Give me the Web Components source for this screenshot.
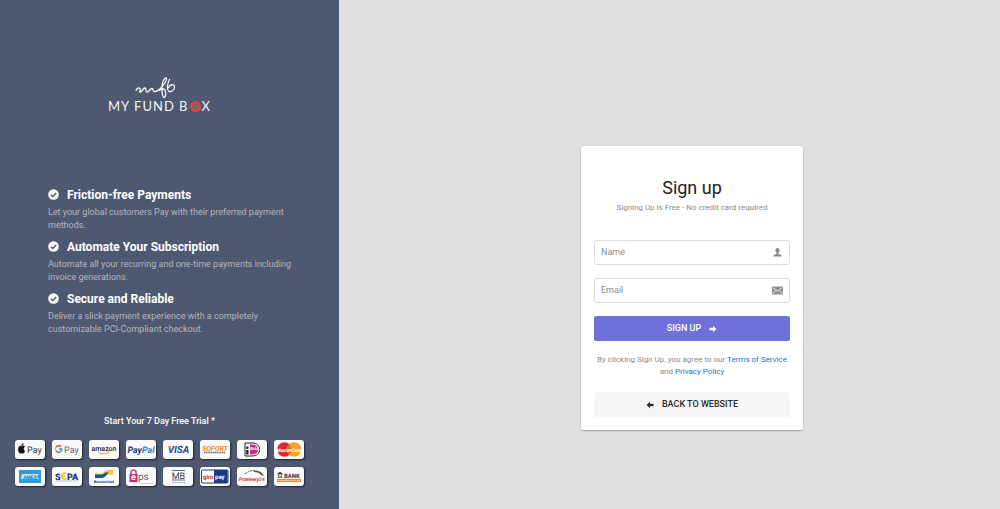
<!DOCTYPE html>
<html lang="en">
<head>
<meta charset="utf-8">
<meta name="viewport" content="width=device-width, initial-scale=1">
<title>MyFundBox - Sign up</title>
<style>
    body {
        margin: 0;
        font-family: Roboto, "Liberation Sans", sans-serif;
        font-size: 9px;
        line-height: 13px;
        color: #8c8c8c;
        background: #e0e0e0;
    }
</style>
</head>
<body>
<signup-page>
    <promo-panel slot="promo">
        <brand-logo slot="logo"></brand-logo>
        <feature-item title="Friction-free Payments">Let your global customers Pay with their preferred payment methods.</feature-item>
        <feature-item title="Automate Your Subscription">Automate all your recurring and one-time payments including invoice generations.</feature-item>
        <feature-item title="Secure and Reliable">Deliver a slick payment experience with a completely customizable PCI-Compliant checkout.</feature-item>
        <payment-methods slot="payments">Start Your 7 Day Free Trial *</payment-methods>
    </promo-panel>
    <signup-card>
        <text-field label="Name" type="text" icon="user"></text-field>
        <text-field label="Email" type="email" icon="mail"></text-field>
    </signup-card>
</signup-page>

<script>
class SignupPage extends HTMLElement {
    constructor() {
        super();
        this.attachShadow({ mode: "open" }).innerHTML = `
            <style>
                :host {
                    display: grid;
                    grid-template-columns: 33.9% 1fr;
                    min-height: 100vh;
                }
                main {
                    display: flex;
                    align-items: center;
                    justify-content: center;
                    padding: 67px 0 0 45px;
                }
            </style>
            <slot name="promo"></slot>
            <main><slot></slot></main>
        `;
    }
}

class PromoPanel extends HTMLElement {
    constructor() {
        super();
        this.attachShadow({ mode: "open" }).innerHTML = `
            <style>
                :host {
                    display: flex;
                    flex-direction: column;
                    justify-content: space-between;
                    box-sizing: border-box;
                    padding: 77px 20px 23px 0;
                    background: #4e5871;
                }
                .features {
                    display: flex;
                    flex-direction: column;
                    gap: 5px;
                    padding: 0 24px 8px 48px;
                }
            </style>
            <slot name="logo"></slot>
            <div class="features"><slot></slot></div>
            <slot name="payments"></slot>
        `;
    }
}

class BrandLogo extends HTMLElement {
    constructor() {
        super();
        this.attachShadow({ mode: "open" }).innerHTML = `
            <style>
                :host {
                    display: flex;
                    flex-direction: column;
                    align-items: center;
                    color: #f4f5f8;
                }
                .script {
                    display: block;
                    width: 42px;
                    height: 22px;
                    margin-right: 8px;
                }
                .word {
                    display: flex;
                    align-items: center;
                    gap: 1px;
                    font: 13px/14px Lato, sans-serif;
                    letter-spacing: 1px;
                }
            </style>
            <svg class="script" viewBox="0 0 42 22" fill="none" stroke="currentColor" stroke-width="1.3" stroke-linecap="round" stroke-linejoin="round" aria-hidden="true">
                <path d="M1 13.5C2 11 4 10.500 5 11.500C6 13 4 15 5 15C7 15 8 11 10 11C12 11 10 15 12 15C14 15 15 11.500 17 11.500C19 11.500 17 15 20 14.500C25 14 32 4 31.500 1.500C31 0 28.500 2 27.500 6C26.500 10 27 20 29 20.500C31 21 31 15 30 13C29 11 25 12.500 24.500 13.500M34.500 2.500C32.500 6 31.500 12 33.500 14C35.500 16 40 13 39.500 9.500C39 6.500 35 7.500 33.500 10.500"/>
            </svg>
            <div class="word">
                <span>MY FUND B</span>
                <svg width="11" height="11" viewBox="0 0 11 11" aria-hidden="true">
                    <circle cx="5.500" cy="5.500" r="3.700" fill="none" stroke="#d8433b" stroke-width="3"/>
                    <circle cx="5.500" cy="5.500" r="4.900" fill="none" stroke="#ef6a4d" stroke-width=".8" stroke-dasharray="1 1"/>
                    <circle cx="5.500" cy="5.500" r="2" fill="#3f7468"/>
                    <path d="M5.500 3.500v4M3.500 5.500h4" stroke="#b8604f" stroke-width=".8"/>
                </svg>
                <span>X</span>
            </div>
        `;
    }
}

class FeatureItem extends HTMLElement {
    constructor() {
        super();
        this.attachShadow({ mode: "open" });
    }

    connectedCallback() {
        this.shadowRoot.innerHTML = `
            <style>
                :host {
                    display: block;
                    color: #b4b6bd;
                }
                h2 {
                    display: flex;
                    align-items: center;
                    gap: 8px;
                    margin: 0 0 1px;
                    font-size: 12px;
                    font-weight: 700;
                    line-height: 20px;
                    color: #fff;
                    white-space: nowrap;
                }
                p {
                    margin: 0;
                }
            </style>
            <h2>
                <svg width="11" height="11" viewBox="0 0 11 11" aria-hidden="true">
                    <circle cx="5.500" cy="5.500" r="5.300" fill="#fff"/>
                    <path d="M2.900 5.700l1.800 1.800 3.500-3.600" fill="none" stroke="#4e5871" stroke-width="1.500"/>
                </svg>
                ${this.getAttribute("title")}
            </h2>
            <p><slot></slot></p>
        `;
    }
}

// Artwork for each payment badge, drawn on a 30x19 board
const BADGES = [
    ["Apple Pay", `
        <path d="M6.800 5.500c0-1 .6-1.700 1.500-2 .1 1-.6 1.900-1.500 2zM9.700 11.200c-.5 1.300-1.200 2.100-1.900 2.100-.5 0-.7-.3-1.300-.3s-.8.3-1.300.3C4 13.300 3.300 10.700 3.300 9.200c0-2 1.100-3.300 2.300-3.300.6 0 .9.300 1.300.3.400 0 .8-.4 1.500-.4.500 0 1.100.3 1.400.8-1.700 1-1.400 3.600-.1 4.600z" fill="#111" stroke="#111" stroke-width=".5"/>
        <text x="12" y="12.500" font-size="9" fill="#333">Pay</text>`],
    ["Google Pay", `
        <g fill="none" stroke-width="1.500">
            <path d="M9 6.700A3.200 3.200 0 0 0 4 7.200" stroke="#ea4335"/>
            <path d="M4 7.200a3.200 3.200 0 0 0 0 3.600" stroke="#fbbc05"/>
            <path d="M4 10.800a3.200 3.200 0 0 0 4.600.7" stroke="#34a853"/>
            <path d="M8.600 11.500c.8-.7 1.100-1.400 1.100-2.500H6.700" stroke="#4285f4"/>
        </g>
        <text x="12" y="12.500" font-size="9" fill="#5f6368">Pay</text>`],
    ["amazon", `
        <text x="15" y="11" font-size="7" font-weight="500" text-anchor="middle" fill="#222">amazon</text>
        <path d="M9 12c3 2.300 8 2.300 10.500.3" fill="none" stroke="#f7981d"/>
        <path d="M18 11.800l2.300-.2-.6 2" fill="none" stroke="#f7981d" stroke-width=".7"/>`],
    ["PayPal", `
        <text x="15" y="12.500" font-size="9" font-weight="700" font-style="italic" text-anchor="middle" fill="#173a72">Pay<tspan fill="#248ac5">Pal</tspan></text>`],
    ["Visa", `
        <text x="15.500" y="13" font-size="10" font-weight="700" font-style="italic" text-anchor="middle" fill="#174ea0">VISA</text>
        <path d="M4.500 6h3l1.200 3.500z" fill="#f2a71b"/>`],
    ["Sofort", `
        <text x="15" y="10.500" font-size="7" font-weight="700" font-style="italic" text-anchor="middle" fill="#ef8b22">SOFORT</text>
        <path d="M4 12.500h21" stroke="#666" stroke-width="1.400" stroke-dasharray="1.300 .5"/>`],
    ["iDEAL", `
        <path d="M8 3h7c5 0 7.500 2.500 7.500 6.500S20 16 15 16H8z" fill="#fff" stroke="#222"/>
        <path d="M13 4.500h2c4 0 6 2 6 5s-2 5-6 5h-2z" fill="#d12a85"/>
        <circle cx="10.300" cy="7.800" r="1.300" fill="#222"/>
        <path d="M9.200 10h2.300v4.500H9.200z" fill="#222"/>
        <text x="12.500" y="9.500" font-size="4" font-weight="700" fill="#fff">DEAL</text>`],
    ["MasterCard", `
        <circle cx="10.500" cy="9.500" r="7.300" fill="#dc2b27"/>
        <circle cx="20" cy="9.500" r="7.300" fill="#f5a623"/>
        <path d="M15.250 4a7.300 7.300 0 0 1 0 11 7.300 7.300 0 0 1 0-11z" fill="#e66b25"/>
        <text x="15" y="11.500" font-size="5" font-weight="700" font-style="italic" text-anchor="middle" fill="#fff">MasterCard</text>`],
    ["American Express", `
        <path d="M4 3h22v13H4z" fill="#2f9bd8"/>
        <path d="M7 7h17l-2 2.500 2 2.500H6z" fill="#c9e7f7"/>
        <text x="15" y="11.500" font-size="5" font-weight="700" text-anchor="middle" fill="#1676b4">AMEX</text>`],
    ["SEPA", `
        <text x="3" y="12.500" font-size="9" font-weight="900" fill="#173b88">S</text>
        <path d="M14.500 6.700a3 3 0 1 0 0 4.900M9 9.200h4.500" fill="none" stroke="#f5c51b" stroke-width="1.600"/>
        <text x="15" y="12.500" font-size="9" font-weight="900" fill="#173b88">PA</text>
        <path d="M4 14h22" stroke="#7184b0" stroke-width=".7" stroke-dasharray="1 .5"/>`],
    ["Bancontact", `
        <path d="M6 6.500h5.500c3 0 4-3.500 7.500-3.500h5v4.500h-4.500c-3 0-4 3.500-7.500 3.500H6z" fill="#f7ca25"/>
        <path d="M6 7.500h6.500c1.500 0 2.500-1 3.500-2h3.500c-2 3-4 5.500-7.500 5.500H6z" fill="#18539b"/>
        <text x="15" y="16" font-size="4" font-weight="700" text-anchor="middle" fill="#18539b">Bancontact</text>`],
    ["eps", `
        <path d="M3.500 7h8v8h-8z" fill="#c52a78"/>
        <path d="M5 7V4.500Q7.500 1.500 10 4.500V7" fill="none" stroke="#c52a78" stroke-width="1.400"/>
        <text x="5" y="13" font-size="9" font-weight="700" fill="#fff">e</text>
        <text x="12" y="13" font-size="10" fill="#666">ps</text>
        <path d="M15 16.500h12" stroke="#999" stroke-width=".7" stroke-dasharray="1 .5"/>`],
    ["Multibanco", `
        <path d="M9 3.500h13M9 13h13" stroke="#4776a0"/>
        <text x="15.500" y="12" font-size="9" text-anchor="middle" fill="#35434f">MB</text>
        <path d="M9 15.500h13" stroke="#888" stroke-width=".8" stroke-dasharray="1 .5"/>`],
    ["giropay", `
        <rect x="1.500" y="3" width="26.500" height="13" rx="1" fill="#fff" stroke="#173a86"/>
        <path d="M14 3h13.500v13H14z" fill="#173a86"/>
        <text x="3" y="11.500" font-size="6" font-weight="700" fill="#d92332">giro</text>
        <text x="15" y="11.500" font-size="6" font-weight="700" fill="#fff">pay</text>`],
    ["Przelewy24", `
        <path d="M8 7Q14 2 20 4" fill="none" stroke="#555" stroke-dasharray="2 1"/>
        <path d="M17 4q7-1 10 5l-3-1q-2-3-7-3z" fill="#555"/>
        <text x="2" y="13.500" font-size="5" font-style="italic" font-weight="700" fill="#d6253b">Przelewy<tspan fill="#777">24</tspan></text>`],
    ["Bank transfer", `
        <path d="M3.500 7L6 5l2.500 2zM3.500 10.500h5M4.500 7.500v3M6 7.500v3M7.500 7.500v3" fill="#333" stroke="#333" stroke-width=".6"/>
        <text x="10" y="10.500" font-size="6" font-weight="700" fill="#333">BANK</text>
        <path d="M3 12h24v3H3z" fill="#ec853a"/>
        <path d="M4 13.500h22" stroke="#f9d5b6" stroke-width="1.200" stroke-dasharray="1.300 .6"/>`]
];

class PaymentMethods extends HTMLElement {
    constructor() {
        super();
        this.attachShadow({ mode: "open" }).innerHTML = `
            <style>
                :host {
                    display: block;
                }
                h3 {
                    margin: 0 0 12px;
                    font-size: 9px;
                    font-weight: 500;
                    line-height: 13px;
                    text-align: center;
                    color: #fff;
                }
                ul {
                    display: grid;
                    grid-template-columns: repeat(8, 30px);
                    justify-content: center;
                    gap: 8px 7px;
                    margin: 0;
                    padding: 0;
                    list-style: none;
                }
                li {
                    height: 19px;
                    border-radius: 3px;
                    background: #fafafa;
                    box-shadow: 1px 1px 2px rgba(0, 0, 0, 0.6);
                }
                svg {
                    display: block;
                    width: 30px;
                    height: 19px;
                    text-rendering: geometricPrecision;
                }
            </style>
            <h3><slot></slot></h3>
            <ul>
                ${BADGES.map(([name, art]) => `
                    <li><svg viewBox="0 0 30 19" role="img" aria-label="${name}">${art}</svg></li>
                `).join("")}
            </ul>
        `;
    }
}

const FIELD_ICONS = {
    user: `<path d="M5.500 1C3.800 1 3.300 2.200 3.500 3.700c.1 1 .5 1.700 1 2.100v.9C4 7.500 1 7.400 1 9.500h9c0-2.100-3-2-3.500-2.800v-.9c.5-.4.900-1.100 1-2.100C7.700 2.200 7.200 1 5.500 1z" fill="#8e8e8e"/>`,
    mail: `<path d="M0 1.500h11v8H0z" fill="#8e8e8e"/><path d="M1 2.700l4.500 3.500L10 2.700M1 8.500l3-3M10 8.500l-3-3" fill="none" stroke="#fff" stroke-width=".8"/>`
};

class TextField extends HTMLElement {
    constructor() {
        super();
        this.attachShadow({ mode: "open" });
    }

    connectedCallback() {
        const label = this.getAttribute("label");
        this.shadowRoot.innerHTML = `
            <style>
                :host {
                    display: block;
                }
                .box {
                    display: flex;
                    align-items: center;
                    box-sizing: border-box;
                    height: 25px;
                    padding: 0 6px;
                    border: 1px solid #dedede;
                    border-radius: 3px;
                    background: #fff;
                }
                .box:focus-within {
                    border-color: #7070db;
                }
                input {
                    flex: 1;
                    min-width: 0;
                    padding: 0;
                    border: 0;
                    outline: 0;
                    background: none;
                    font: inherit;
                    color: #333;
                }
                input::placeholder {
                    color: #8c8c8c;
                    opacity: 1;
                }
            </style>
            <label class="box">
                <input type="${this.getAttribute("type")}" placeholder="${label}" aria-label="${label}">
                <svg width="11" height="11" viewBox="0 0 11 11" aria-hidden="true">${FIELD_ICONS[this.getAttribute("icon")]}</svg>
            </label>
        `;
    }
}

class SignupCard extends HTMLElement {
    constructor() {
        super();
        this.attachShadow({ mode: "open" }).innerHTML = `
            <style>
                :host {
                    display: block;
                    box-sizing: border-box;
                    width: 222px;
                    padding: 30px 13px 13px;
                    border-radius: 2px;
                    background: #fff;
                    box-shadow: 0 1px 2px rgba(0, 0, 0, 0.3);
                }
                header {
                    margin-bottom: 26px;
                    text-align: center;
                }
                h1 {
                    margin: 0;
                    font-size: 18px;
                    font-weight: 400;
                    line-height: 24px;
                    color: #222;
                }
                header p {
                    margin: 2px 0 0;
                    font-size: 8px;
                    line-height: 12px;
                }
                form {
                    display: flex;
                    flex-direction: column;
                    gap: 13px;
                }
                button, .back {
                    display: flex;
                    align-items: center;
                    justify-content: center;
                    gap: 8px;
                    box-sizing: border-box;
                    height: 25px;
                    padding: 0;
                    border: 0;
                    border-radius: 2px;
                    font: inherit;
                    font-weight: 500;
                    text-transform: uppercase;
                    text-decoration: none;
                    cursor: pointer;
                }
                button {
                    background: #7070db;
                    color: #fff;
                }
                .back {
                    background: #f6f6f6;
                    color: #2b2b2b;
                }
                .terms {
                    margin: 0 0 1px;
                    font-size: 8px;
                    line-height: 12px;
                    text-align: center;
                }
                .terms a {
                    color: #1b74d0;
                    text-decoration: none;
                }
            </style>
            <header>
                <h1>Sign up</h1>
                <p>Signing Up is Free - No credit card required</p>
            </header>
            <form>
                <slot></slot>
                <button type="submit">Sign up
                    <svg width="8" height="8" viewBox="0 0 8 8" aria-hidden="true"><path d="M4 .7L7.500 4 4 7.300V5.300H.5V2.700H4z" fill="currentColor"/></svg>
                </button>
                <p class="terms">By clicking Sign Up, you agree to our <a href="#terms">Terms of Service</a> and <a href="#privacy">Privacy Policy</a></p>
                <a class="back" href="#home">
                    <svg width="8" height="8" viewBox="0 0 8 8" aria-hidden="true"><path d="M4 .7L.5 4 4 7.300V5.300h3.500V2.700H4z" fill="currentColor"/></svg>
                    Back to website
                </a>
            </form>
        `;
    }
}

customElements.define("signup-page", SignupPage);
customElements.define("promo-panel", PromoPanel);
customElements.define("brand-logo", BrandLogo);
customElements.define("feature-item", FeatureItem);
customElements.define("payment-methods", PaymentMethods);
customElements.define("text-field", TextField);
customElements.define("signup-card", SignupCard);
</script>
</body>
</html>
